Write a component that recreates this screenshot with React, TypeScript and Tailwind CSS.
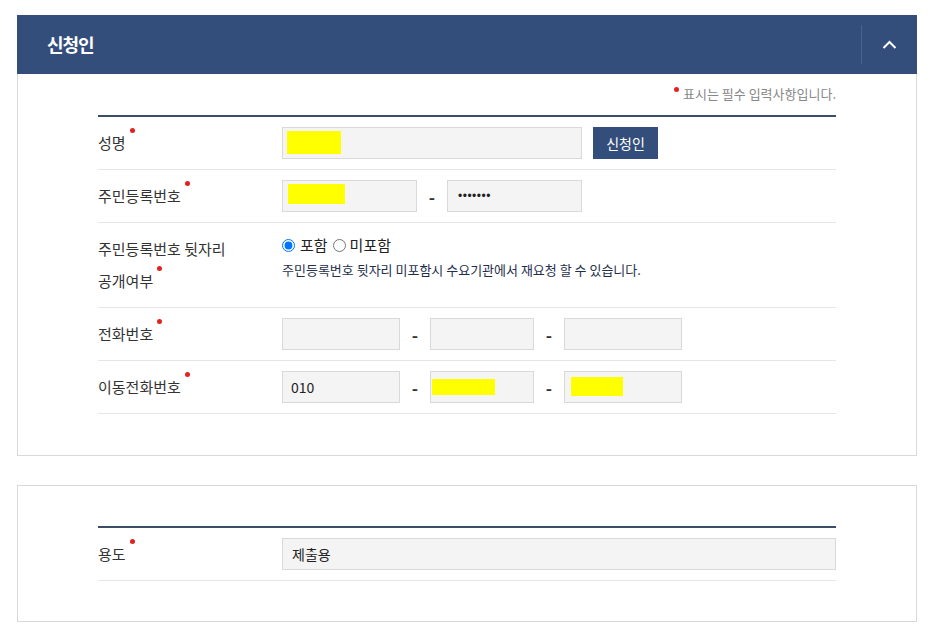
import React from "react";

const Dot = () => (
  <span className="relative -top-[16px] ml-[4px] inline-block w-[5px] h-[5px] rounded-full bg-[#e3211f]" />
);

const Box = ({
  w,
  children,
  redact,
}: {
  w: string;
  children?: React.ReactNode;
  redact?: { l: number; t: number; w: number; h: number };
}) => (
  <div
    className={`relative ${w} h-[32px] border border-[#d9d9d9] bg-[#f4f4f4] flex items-center pl-[8px] text-[14px] text-[#222]`}
  >
    {children}
    {redact && (
      <span
        className="absolute bg-[#ffff00]"
        style={{ left: redact.l, top: redact.t, width: redact.w, height: redact.h }}
      />
    )}
  </div>
);

const Dash = () => (
  <div className="w-[30px] text-center text-[17px] font-bold text-[#333] leading-none">-</div>
);

const Row = ({
  label,
  children,
}: {
  label: React.ReactNode;
  children: React.ReactNode;
}) => (
  <div className="flex border-b border-[#e6e6e6]">
    <div className="w-[184px] flex items-center text-[15px] text-[#333]">
      <span>
        {label}
        <Dot />
      </span>
    </div>
    <div className="flex-1 flex items-center py-[10px]">{children}</div>
  </div>
);

export default function App() {
  return (
    <div className="w-[936px] min-h-[637px] bg-white pt-[15px] px-[17px] font-['Noto_Sans_CJK_KR','Malgun_Gothic',sans-serif]">
      <section className="w-[900px]">
        <header className="h-[59px] bg-[#344e7b] flex items-center pl-[30px]">
          <h2 className="flex-1 text-white text-[18px] font-bold tracking-[-1px]">신청인</h2>
          <div className="w-px h-[39px] bg-[#4a6291]" />
          <div className="w-[55px] h-full flex items-center justify-center">
            <svg width="15" height="9" viewBox="0 0 15 9" fill="none">
              <polyline points="1.5,8 7.5,2 13.5,8" stroke="white" strokeWidth="2" />
            </svg>
          </div>
        </header>
        <div className="border border-t-0 border-[#d9d9d9] px-[80px] pt-[12px] pb-[41px]">
          <div className="h-[16px] mb-[13px] flex justify-end items-center text-[13px] text-[#888] leading-[16px]">
            <span className="relative -top-[5px] mr-[4px] inline-block w-[5px] h-[5px] rounded-full bg-[#e3211f]" />
            표시는 필수 입력사항입니다.
          </div>
          <div className="border-t-2 border-[#3c4d68]">
            <Row label="성명">
              <Box w="w-[300px]" redact={{ l: 4, t: 3, w: 54, h: 23 }} />
              <button className="ml-[11px] w-[65px] h-[32px] bg-[#344e7b] text-white text-[14px]">
                신청인
              </button>
            </Row>
            <Row label="주민등록번호">
              <Box w="w-[135px]" redact={{ l: 5, t: 3, w: 57, h: 20 }} />
              <Dash />
              <Box w="w-[135px]">
                <span className="font-['Liberation_Sans',sans-serif] text-[12px] pl-[2px] tracking-[0.5px]">•••••••</span>
              </Box>
            </Row>
            <div className="flex border-b border-[#e6e6e6]">
              <div className="w-[184px] py-[10px] text-[15px] text-[#333] leading-[32px]">
                <div>주민등록번호 뒷자리</div>
                <div>
                  공개여부
                  <Dot />
                </div>
              </div>
              <div className="flex-1 pt-[11px]">
                <div className="h-[22px] flex items-center text-[15px] text-[#222]">
                  <label className="flex items-center">
                    <input type="radio" name="open" defaultChecked className="m-0 w-[13px] h-[13px]" />
                    <span className="ml-[5px]">포함</span>
                  </label>
                  <label className="flex items-center ml-[5px]">
                    <input type="radio" name="open" className="m-0 w-[13px] h-[13px]" />
                    <span className="ml-[4px]">미포함</span>
                  </label>
                </div>
                <div className="mt-[4px] leading-[20px] text-[13px] text-[#1f2f4d]">
                  주민등록번호 뒷자리 미포함시 수요기관에서 재요청 할 수 있습니다.
                </div>
              </div>
            </div>
            <Row label="전화번호">
              <Box w="w-[118px]" />
              <Dash />
              <Box w="w-[104px]" />
              <Dash />
              <Box w="w-[118px]" />
            </Row>
            <Row label="이동전화번호">
              <Box w="w-[118px]">010</Box>
              <Dash />
              <Box w="w-[104px]" redact={{ l: 1, t: 7, w: 63, h: 16 }} />
              <Dash />
              <Box w="w-[118px]" redact={{ l: 6, t: 5, w: 52, h: 19 }} />
            </Row>
          </div>
        </div>
      </section>

      <section className="w-[900px] mt-[29px] border border-[#d9d9d9] px-[80px] pt-[40px] pb-[40px]">
        <div className="border-t-2 border-[#3c4d68]">
          <Row label="용도">
            <Box w="w-full">
              <span className="pl-[1px]">제출용</span>
            </Box>
          </Row>
        </div>
      </section>
    </div>
  );
}
